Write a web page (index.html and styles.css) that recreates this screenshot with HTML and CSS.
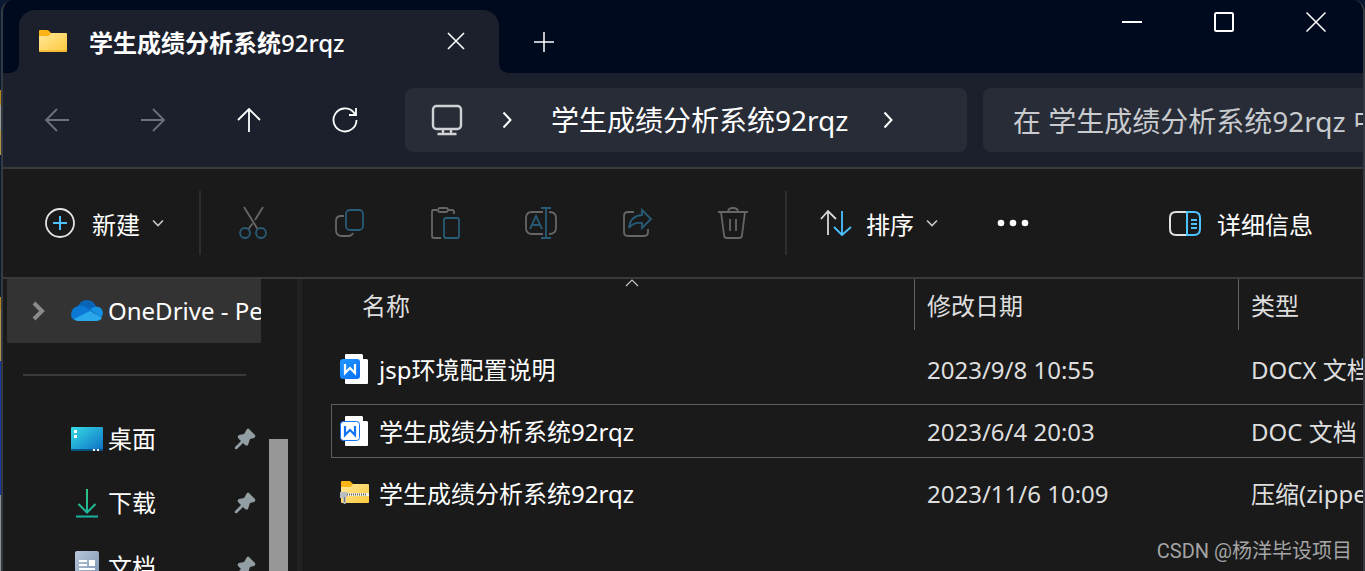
FILE: index.html
```html
<!DOCTYPE html>
<html lang="zh-CN">
<head>
<meta charset="utf-8">
<title>学生成绩分析系统92rqz</title>
<link rel="stylesheet" href="styles.css">
</head>
<body>
<svg class="defs" aria-hidden="true">
  <defs>
    <linearGradient id="gold" x1="0" y1="0" x2="1" y2="1"><stop offset="0" stop-color="#ffe79a"/><stop offset="1" stop-color="#ffc93c"/></linearGradient>
    <linearGradient id="sea" x1="0" y1="0" x2="1" y2="1"><stop offset="0" stop-color="#37dbe6"/><stop offset="1" stop-color="#0c6fc4"/></linearGradient>
    <linearGradient id="mint" gradientUnits="userSpaceOnUse" x1="0" y1="0" x2="0" y2="29"><stop offset="0" stop-color="#35c481"/><stop offset="1" stop-color="#17b3a2"/></linearGradient>
    <linearGradient id="paper" x1="0" y1="0" x2="1" y2="1"><stop offset="0" stop-color="#b9c8da"/><stop offset="1" stop-color="#7890b0"/></linearGradient>
    <linearGradient id="wps" x1="0" y1="0" x2="1" y2="1"><stop offset="0" stop-color="#1e9bff"/><stop offset="1" stop-color="#0a6cf5"/></linearGradient>
    <symbol id="pin" viewBox="0 0 22 22"><path d="M13 1Q14 0 15 1L21 7Q22 9 20 10L16 11L14 17Q13 18 11 17L9 15L3 21Q0 22 1 19L7 13L4 10Q3 8 5 7L10 6Z" fill="#939da4"/></symbol>
    <symbol id="down" viewBox="0 0 12 8"><path d="M1 1.5L6 6.5L11 1.5" fill="none" stroke="#c8c8c8" stroke-width="1.6"/></symbol>
  </defs>
</svg>
<div class="window">
  <header class="titlebar">
    <div class="tab">
      <svg width="28" height="22" viewBox="0 0 28 22"><path d="M0 1Q0 0 1 0H8Q10 0 11 2L12 3V8H0Z" fill="#fcb316"/><path d="M0 6H9Q11 6 12 3H27Q28 3 28 4V21Q28 22 27 22H1Q0 22 0 21Z" fill="url(#gold)"/><path d="M0 21H28" stroke="#e9a91a"/></svg>
      <span class="tab-title">学生成绩分析系统<span class="latin">92rqz</span></span>
      <button class="tab-close" aria-label="关闭标签页"><svg width="18" height="18"><path d="M1 1L17 17M17 1L1 17" stroke="#fff" stroke-width="1.6"/></svg></button>
    </div>
    <button class="tab-add" aria-label="新标签页"><svg width="20" height="20"><path d="M10 0V20M0 10H20" stroke="#fff" stroke-width="1.5"/></svg></button>
    <div class="controls">
      <button aria-label="最小化"><svg width="20" height="20"><path d="M0 10H20" stroke="#fff" stroke-width="2"/></svg></button>
      <button aria-label="最大化"><svg width="20" height="20"><rect x="1" y="1" width="18" height="18" rx="1.5" fill="none" stroke="#fff" stroke-width="2"/></svg></button>
      <button aria-label="关闭"><svg width="20" height="20"><path d="M.5 .5L19.500 19.500M19.500 .5L.5 19.500" stroke="#fff" stroke-width="1.5"/></svg></button>
    </div>
  </header>

  <nav class="navbar">
    <button class="nav-btn dim" aria-label="后退"><svg width="24" height="24"><path d="M24 12H1M12 1L1 12L12 23"/></svg></button>
    <button class="nav-btn dim" aria-label="前进"><svg width="24" height="24"><path d="M0 12H23M12 1L23 12L12 23"/></svg></button>
    <button class="nav-btn" aria-label="上移"><svg width="24" height="24"><path d="M12 24V1M1 12L12 1L23 12"/></svg></button>
    <button class="nav-btn" aria-label="刷新"><svg width="26" height="26"><path d="M24.500 13A11.500 11.500 0 1 1 21.500 5.200L24 8M24 1V8H17"/></svg></button>
    <div class="address">
      <button aria-label="此电脑"><svg width="32" height="32" fill="none" stroke="#cfd1d5" stroke-width="2.400"><rect x="2" y="2" width="28" height="23" rx="3.500"/><path d="M12 25V30M20 25V30M6.500 30H25.500"/></svg></button>
      <button class="crumb-arrow" aria-label="展开"><svg width="10" height="18"><path d="M1.500 1.500L8.500 9L1.500 16.500"/></svg></button>
      <button class="crumb">学生成绩分析系统92rqz</button>
      <button class="crumb-arrow last" aria-label="展开"><svg width="10" height="18"><path d="M1.500 1.500L8.500 9L1.500 16.500"/></svg></button>
    </div>
    <input class="search" type="text" aria-label="搜索" placeholder="在 学生成绩分析系统92rqz 中搜索">
  </nav>

  <div class="toolbar">
    <button class="tool new"><svg width="32" height="32" fill="none"><circle cx="16" cy="16" r="14" stroke="#e4e4e4" stroke-width="1.800"/><path d="M16 9V23M9 16H23" stroke="#4cc2ff" stroke-width="2"/></svg><span>新建</span><svg width="12" height="8"><use href="#down"/></svg></button>
    <span class="rule"></span>
    <div class="icons">
      <button aria-label="剪切"><svg width="32" height="34"><g class="g"><path d="M7 1L20.500 23M26 1L18 14M15.500 17.500L11.500 23"/></g><g class="b"><circle cx="8" cy="27" r="5"/><circle cx="24" cy="27" r="5"/></g></svg></button>
      <button aria-label="复制"><svg width="32" height="32"><path class="g" d="M11 9H8Q3 9 3 14V23Q3 29 9 29H15Q19 29 20 26"/><rect class="b" x="13" y="3" width="17" height="20" rx="4"/></svg></button>
      <button aria-label="粘贴"><svg width="32" height="34"><g class="g"><path d="M8 4H4Q3 4 3 6V30Q3 32 5 32H12M19 4H23Q25 4 25 6V8"/><rect x="9" y="2" width="10" height="4" rx="2"/></g><rect class="b" x="15" y="12" width="15" height="20" rx="2"/></svg></button>
      <button aria-label="重命名"><svg width="34" height="34"><path class="g" d="M19 6H8Q2 6 2 12V22Q2 28 8 28H19M25 6Q32 6 32 12V22Q32 28 25 28"/><path class="b" d="M6 23L12 10L18 23M8 19H16M22 2V32M17 2H27M17 32H27"/></svg></button>
      <button aria-label="共享"><svg width="34" height="34"><path class="g" d="M14 6H8Q4 6 4 10V26Q4 30 8 30H24Q28 30 28 26V23"/><path class="b" d="M22 4L31 13L22 22V17Q13 16 9 22Q10 10 22 9Z"/></svg></button>
      <button aria-label="删除"><svg width="32" height="34"><path class="g" d="M1 6H31M11 6Q11 2 16 2T21 6M4 6L7 29Q7 32 10 32H22Q25 32 25 29L28 6M13 13V25M19 13V25"/></svg></button>
    </div>
    <span class="rule"></span>
    <button class="tool sort"><svg width="32" height="28" fill="none" stroke-width="1.800"><path d="M8 26V2M1 10L8 2L16 10" stroke="#d8d8d8"/><path d="M22 2V26M14 18L22 26L31 18" stroke="#4cc2ff"/></svg><span>排序</span><svg width="12" height="8"><use href="#down"/></svg></button>
    <button class="tool more" aria-label="更多"><svg width="32" height="8" fill="#fff"><circle cx="4" cy="4" r="3.300"/><circle cx="16" cy="4" r="3.300"/><circle cx="28" cy="4" r="3.300"/></svg></button>
    <button class="tool details"><svg width="34" height="28" fill="none" stroke-width="2"><path d="M19 3H8Q2 3 2 9V20Q2 26 8 26H19" stroke="#e0e0e0"/><path d="M19 3H26Q32 3 32 9V20Q32 26 26 26H19ZM23 11H29M23 15H29M23 19H29" stroke="#4cc2ff"/></svg><span>详细信息</span></button>
  </div>

  <div class="content">
    <aside class="sidebar">
      <div class="tree">
        <a class="node active" href="#"><svg class="twist" width="16" height="20"><path d="M3 2L11 10L3 18" fill="none" stroke="#8a8a8a" stroke-width="4"/></svg><svg class="glyph" width="32" height="22"><path d="M6 8Q9 0 16 0Q22 0 25 6L18 13Z" fill="#0a64b8"/><path d="M0 15Q0 7 8 6Q12 5 16 8L23 13L3 20Q0 18 0 15Z" fill="#0b79d4"/><path d="M19 10Q23 5 28 7Q32 9 32 14L30 18Z" fill="#1491e0"/><path d="M3 19L19 11Q26 15 31 18Q29 21 25 21H7Q4 21 3 19Z" fill="#29a8ee"/></svg><span class="name">OneDrive - Personal</span></a>
        <hr>
        <a class="node" href="#"><span class="twist"></span><svg class="glyph" width="32" height="24"><rect width="32" height="24" rx="1" fill="url(#sea)"/><rect y="22" width="32" height="2" fill="#095487"/><path d="M3 3H6V6H3ZM3 8H6V11H3ZM22 22H24V24H22ZM26 22H28V24H26Z" fill="#fff"/></svg><span class="name">桌面</span><svg class="pin"><use href="#pin"/></svg></a>
        <a class="node" href="#"><span class="twist"></span><svg class="glyph" width="32" height="29" fill="none" stroke="url(#mint)" stroke-width="2"><path d="M16.010 0L16 23M7.500 15L16 23.500L24.500 15M5 27.500L27 27.510"/></svg><span class="name">下载</span><svg class="pin"><use href="#pin"/></svg></a>
        <a class="node" href="#"><span class="twist"></span><svg class="glyph" width="32" height="32"><rect x="4" width="24" height="32" rx="2" fill="url(#paper)"/><path d="M8 10H16M8 14H16M8 18H24" stroke="#fff" stroke-width="2"/><rect x="18" y="9" width="6" height="6" fill="#fff"/></svg><span class="name">文档</span><svg class="pin"><use href="#pin"/></svg></a>
      </div>
      <div class="scroll"><div class="thumb"></div></div>
    </aside>

    <main class="files">
      <table>
        <colgroup><col class="c-name"><col class="c-date"><col></colgroup>
        <thead><tr><th><div>名称<svg class="caret" width="14" height="8"><path d="M1 7L7 1L13 7" fill="none" stroke="#c8c8c8" stroke-width="1.200"/></svg></div></th><th><div>修改日期</div></th><th><div>类型</div></th></tr></thead>
        <tbody>
          <tr><td><div class="cell"><svg width="30" height="32"><path d="M5 2Q5 1 6 1H22L28 7V30Q28 31 27 31H6Q5 31 5 30Z" fill="#fff"/><path d="M23 1V6H28Z" fill="#1b1b1b"/><rect y="6" width="20" height="20" rx="3" fill="url(#wps)"/><path d="M5 11V20L10 15L15 20V11" fill="none" stroke="#fff" stroke-width="2.200"/></svg><span>jsp环境配置说明</span></div></td><td><div class="cell"><span>2023/9/8 10:55</span></div></td><td><div class="cell"><span>DOCX 文档</span></div></td></tr>
          <tr class="focus"><td><div class="cell"><svg width="30" height="32"><path d="M5 2Q5 1 6 1H22L28 7V30Q28 31 27 31H6Q5 31 5 30Z" fill="#fff"/><path d="M23 1V6H28Z" fill="#1b1b1b"/><rect x=".5" y="6.500" width="19" height="19" rx="3" fill="#fff" stroke="#1473f5"/><path d="M5 11V20L10 15L15 20V11" fill="none" stroke="#1473f5" stroke-width="2.200"/></svg><span>学生成绩分析系统92rqz</span></div></td><td><div class="cell"><span>2023/6/4 20:03</span></div></td><td><div class="cell"><span>DOC 文档</span></div></td></tr>
          <tr><td><div class="cell"><svg width="30" height="24"><path d="M1 1Q1 0 2 0H10L13 3V8H1Z" fill="#fcb316"/><path d="M1 6H9Q12 6 13 3H28Q29 3 29 4V21Q29 22 28 22H2Q1 22 1 21Z" fill="url(#gold)"/><path d="M7 13.500H29" stroke="#f0efe8" stroke-width="3"/><path d="M7 13.500H26" stroke="#6d6650" stroke-width="2" stroke-dasharray="1 1"/><path d="M0 11H7V16H6V22Q5 24 3 22V17H0Z" fill="#b8bdc0"/><path d="M4 16H5V21H4Z" fill="#777"/></svg><span>学生成绩分析系统92rqz</span></div></td><td><div class="cell"><span>2023/11/6 10:09</span></div></td><td><div class="cell"><span>压缩(zipped)文件夹</span></div></td></tr>
        </tbody>
      </table>
    </main>
  </div>
</div>
<div class="watermark">CSDN @杨洋毕设项目</div>
</body>
</html>
```

FILE: styles.css
```css
* { box-sizing: border-box; }

body {
  margin: 0;
  padding: 0 0 0 1px;
  height: 100vh;
  overflow: hidden;
  position: relative;
  color: #fff;
  font: 24px/32px "Noto Sans", "Noto Sans CJK SC", sans-serif;
  background: linear-gradient(#0a1830 0 90px, #b5851c 90px 105px, #9a9a98 105px 130px, #b09545 130px 155px, #0a1830 155px 297px, #b5851c 297px 310px, #b09545 310px 361px, #1638a0 361px 495px, #8f8f8f 495px);
}

button {
  display: flex;
  align-items: center;
  justify-content: center;
  padding: 0;
  border: 0;
  background: none;
  color: inherit;
  font: inherit;
  white-space: nowrap;
}

svg { display: block; flex: none; }
.defs { position: absolute; width: 0; height: 0; }

.window {
  display: flex;
  flex-direction: column;
  height: 100%;
  overflow: hidden;
  border: solid #343942;
  border-width: 0 2px;
  border-radius: 12px 12px 0 0;
  background: #1a1a1a;
}

/* Title bar */
.titlebar {
  display: flex;
  flex: none;
  height: 73px;
  padding-left: 16px;
  background: #000a1f;
}

.tab {
  position: relative;
  display: flex;
  align-items: center;
  width: 480px;
  margin-top: 10px;
  padding: 0 34px 2px 20px;
  border-radius: 16px 16px 0 0;
  background: #1b202c;
}

.tab::before,
.tab::after {
  content: "";
  position: absolute;
  bottom: 0;
  width: 8px;
  height: 8px;
}

.tab::before { left: -8px; background: radial-gradient(circle at 0 0, transparent 7px, #1b202c 8px); }
.tab::after { right: -8px; background: radial-gradient(circle at 100% 0, transparent 7px, #1b202c 8px); }

.tab-title { flex: 1; margin-left: 22px; padding-top: 4px; font-weight: 700; white-space: nowrap; }
.latin { font-weight: 500; }
.tab-add { width: 90px; padding-top: 10px; }
.controls { display: flex; margin: 0 1px 0 auto; height: 44px; }
.controls button { width: 92px; }

/* Navigation */
.navbar {
  display: flex;
  flex: none;
  height: 96px;
  padding: 15px 0 15px 6px;
  border-bottom: 2px solid #3a3a3a;
  background: #1b202c;
}

.nav-btn { width: 96px; }
.nav-btn path { fill: none; stroke: #fff; stroke-width: 1.8; }
.dim path { stroke: #6e7179; }

.address,
.search {
  min-width: 0;
  border: 0;
  background: #272c37;
  font-size: 28px;
}

.address {
  display: flex;
  flex: 3 3 562px;
  margin-left: 12px;
  padding-left: 26px;
  border-radius: 8px;
}

.crumb-arrow { width: 88px; }
.crumb-arrow path { fill: none; stroke: #fff; stroke-width: 2; }
.last { width: 80px; }

.search {
  flex: 2 2 380px;
  margin-left: 16px;
  padding: 1px 0 0 30px;
  border-radius: 8px 0 0 8px;
  color: #fff;
  font-family: inherit;
}

.search::placeholder { color: #c9cbcf; opacity: 1; }

/* Command bar */
.toolbar {
  display: flex;
  align-items: center;
  flex: none;
  height: 110px;
  border-bottom: 2px solid #3a3a3a;
}

.tool span { padding-top: 4px; }
.new { width: 196px; gap: 12px; padding-left: 6px; }
.new span { margin-left: 4px; }
.rule { width: 2px; height: 64px; background: #2e2e2e; }
.icons { display: flex; margin: 0 4px; }
.icons button { width: 96px; height: 64px; }
.icons svg { fill: none; stroke-width: 1.8; }
.g { stroke: #666; }
.b { stroke: #285b76; }
.sort { width: 184px; gap: 12px; }
.sort span { margin-left: 2px; }
.more { width: 84px; }
.details { gap: 15px; margin: 0 50px 0 auto; }

/* Content */
.content { display: flex; flex: 1; min-height: 0; }

.sidebar {
  display: flex;
  flex: none;
  width: 299px;
  padding-left: 4px;
  overflow: hidden;
  border-right: 5px solid #222;
}

.tree { width: 254px; }

.node {
  display: flex;
  align-items: center;
  height: 64px;
  padding-left: 24px;
  overflow: hidden;
  color: #fff;
  text-decoration: none;
  white-space: nowrap;
}

.active { background: #333; }
.twist { flex: none; width: 16px; }
.glyph { margin: 0 5px 0 24px; }
.pin { width: 22px; height: 22px; margin: 0 5px 0 auto; }

hr {
  height: 2px;
  margin: 31px 15px 31px 16px;
  border: 0;
  background: #3a3a3a;
}

.scroll { width: 19px; margin-left: 8px; padding-top: 160px; }
.thumb { height: 100%; background: #979797; }

.files { flex: 1; min-width: 0; padding-left: 29px; }

table {
  width: 100%;
  table-layout: fixed;
  border-collapse: collapse;
}

.c-name { width: 583px; }
.c-date { width: 324px; }
th, td { padding: 0; font-weight: 400; text-align: left; white-space: nowrap; }
th { padding-bottom: 8px; color: #dedede; }

th div {
  position: relative;
  height: 51px;
  padding-left: 12px;
  border-left: 1px solid #636363;
  line-height: 54px;
}

th:first-child div { padding-left: 31px; border: 0; }
.caret { position: absolute; top: 0; left: 294px; }

td { padding: 4px 0; }

.cell {
  display: flex;
  align-items: center;
  height: 54px;
  padding-left: 13px;
  overflow: hidden;
  border: solid transparent;
  border-width: 1px 0;
  color: #dedede;
}

.cell span { padding-top: 2px; }
td:first-child .cell { gap: 9px; padding-left: 8px; border-left-width: 1px; color: #fff; }
.focus .cell { border-color: #5e5e5e; }

.watermark {
  position: absolute;
  right: 13px;
  bottom: 4px;
  color: #a4a4a4;
  font: 20px/32px Roboto, "Noto Sans CJK SC", sans-serif;
}
```
